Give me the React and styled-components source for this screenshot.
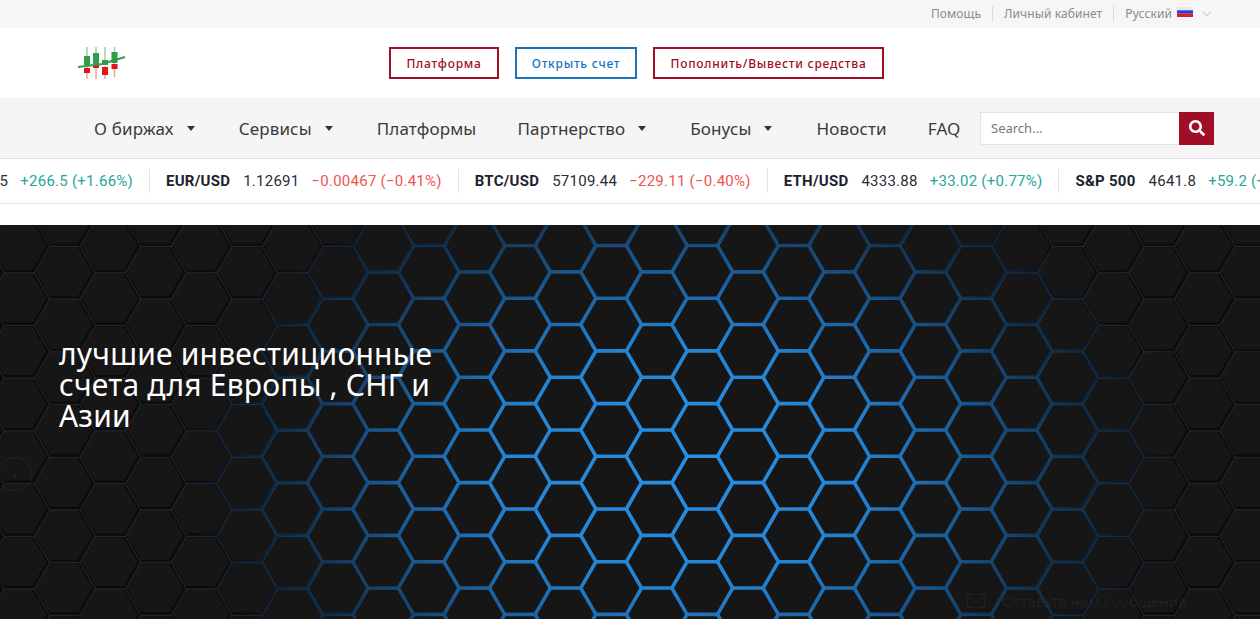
import styled, { createGlobalStyle } from 'styled-components';
import { ChevronDown, Mail } from 'lucide-react';
import { FaSearch } from 'react-icons/fa';

const GlobalStyle = createGlobalStyle`
  html, body { margin: 0; padding: 0; background: #fff; }
  body { font-family: "Noto Sans", "Open Sans", sans-serif; overflow: hidden; }
  * { box-sizing: border-box; }
`;

const Page = styled.div`
  width: 1260px;
  height: 619px;
  display: flex;
  flex-direction: column;
  overflow: hidden;
`;

const TopBar = styled.div`
  height: 28px;
  background: #f6f6f6;
  display: flex;
  align-items: center;
  justify-content: flex-end;
  padding-right: 35px;
  font-size: 12px;
  letter-spacing: 0.1px;
  color: #8b8b8b;
`;

const TopLink = styled.a`
  padding: 0 11px;
  height: 16px;
  line-height: 16px;
  border-right: ${(p) => (p.$last ? 'none' : '1px solid #ddd')};
  display: flex;
  align-items: center;
  gap: 5px;
`;

const FlagMark = styled.svg`
  margin-bottom: 4px;
`;

const LangChevron = styled(ChevronDown)`
  margin-left: 2px;
`;

const Header = styled.header`
  height: 70px;
  background: #fff;
  display: flex;
  align-items: center;
  padding-left: 78px;
`;

const LogoMark = styled.svg`
  filter: blur(0.7px);
`;

const Buttons = styled.div`
  margin-left: 263px;
  display: flex;
  gap: 16px;
`;

const OutlineButton = styled.a`
  height: 32px;
  width: ${(p) => p.$w}px;
  display: flex;
  align-items: center;
  justify-content: center;
  border: 2px solid ${(p) => p.$color};
  color: ${(p) => p.$color};
  font-size: 12px;
  font-weight: 500;
  letter-spacing: 0.75px;
`;

const NavBar = styled.nav`
  height: 60px;
  background: #f5f5f5;
  display: flex;
  align-items: center;
  padding: 0 46px 0 94px;
`;

const NavList = styled.div`
  display: flex;
  align-items: center;
  gap: 41px;
`;

const NavItem = styled.a`
  display: flex;
  align-items: center;
  gap: 13px;
  padding-right: ${(p) => (p.$menu ? 3 : 0)}px;
  font-size: 17px;
  letter-spacing: 0.15px;
  color: #3a3a3a;
  white-space: nowrap;
`;

const Caret = styled.span`
  width: 0;
  height: 0;
  border-left: 4px solid transparent;
  border-right: 4px solid transparent;
  border-top: 5px solid #333;
`;

const Search = styled.div`
  display: flex;
  width: 234px;
  height: 33px;
  margin-left: auto;
`;

const SearchInput = styled.input`
  flex: 1;
  min-width: 0;
  border: 1px solid #e3e3e3;
  border-right: none;
  background: #fff;
  padding: 0 10px;
  font-family: inherit;
  font-size: 13px;
  outline: none;
  &::placeholder { color: #777; opacity: 1; }
`;

const SearchButton = styled.button`
  width: 35px;
  border: none;
  background: #a10d26;
  color: #fff;
  display: flex;
  align-items: center;
  justify-content: center;
  padding: 0;
`;

const Ticker = styled.div`
  height: 46px;
  background: #fff;
  border-top: 1px solid #e0e3eb;
  border-bottom: 1px solid #e0e3eb;
  overflow: hidden;
  display: flex;
  align-items: center;
`;

const Track = styled.div`
  display: flex;
  align-items: center;
  flex: none;
  transform: translateX(-169px);
`;

const Quote = styled.div`
  display: flex;
  align-items: center;
  height: 24px;
  padding: 0 16px;
  gap: 12px;
  font-family: Roboto, sans-serif;
  font-size: 15px;
  letter-spacing: 0.25px;
  white-space: nowrap;
  border-left: ${(p) => (p.$first ? 'none' : '1px solid #e0e3eb')};
`;

const Symbol = styled.span`
  font-weight: 700;
  color: #1e222d;
  margin-right: 1px;
`;

const Price = styled.span`
  color: #2a2e39;
`;

const Change = styled.span`
  color: ${(p) => (p.$up ? '#26a69a' : '#ef5350')};
`;

const Spacer = styled.div`
  height: 21px;
  background: #fff;
`;

const Hero = styled.section`
  position: relative;
  flex: 1;
  background: #161616;
  overflow: hidden;
`;

const HexLayer = styled.svg`
  position: absolute;
  inset: 0;
`;

const HeroTitle = styled.h1`
  position: relative;
  margin: 0;
  padding: 113px 0 0 59px;
  width: 440px;
  font-size: 30px;
  line-height: 31px;
  letter-spacing: 0.2px;
  font-weight: 400;
  color: #fff;
`;

const PrevArrow = styled.div`
  position: absolute;
  left: -2px;
  top: 232px;
  width: 34px;
  height: 34px;
  border-radius: 50%;
  border: 1px solid rgba(255, 255, 255, 0.06);
  color: rgba(255, 255, 255, 0.08);
  display: flex;
  align-items: center;
  justify-content: center;
  font-size: 18px;
`;

const ChatHint = styled.div`
  position: absolute;
  left: 966px;
  top: 366px;
  display: flex;
  align-items: center;
  gap: 16px;
  font-size: 15px;
  color: rgba(255, 255, 255, 0.06);
`;

const HEX_S = 30.4;
const HEX_H = 52.7;
const COL_W = 45.6;

// honeycomb outline, anchored on a cell measured in the reference
function hexPath() {
  let d = '';
  for (let i = -15; i < 15; i++) {
    const cx = 656.7 + i * COL_W;
    const offset = i % 2 === 0 ? 0 : HEX_H / 2;
    for (let j = -1; j < 9; j++) {
      const cy = 231.3 - 4 * HEX_H + j * HEX_H + offset;
      const top = cy - HEX_H / 2;
      const bottom = cy + HEX_H / 2;
      const half = HEX_S / 2;
      d += `M${cx - half} ${top}L${cx + half} ${top}L${cx + HEX_S} ${cy}L${cx + half} ${bottom}L${cx - half} ${bottom}L${cx - HEX_S} ${cy}Z`;
    }
  }
  return d;
}

const honeycomb = hexPath();

const Honeycomb = () => (
  <HexLayer width="1260" height="394" viewBox="0 0 1260 394">
    <defs>
      <radialGradient
        id="glow"
        gradientUnits="userSpaceOnUse"
        cx="0"
        cy="0"
        r="1"
        gradientTransform="translate(680 240) scale(510 350)"
      >
        <stop offset="0" stopColor="#2a90e6" />
        <stop offset="0.35" stopColor="#2484d4" />
        <stop offset="0.6" stopColor="#1a5c98" stopOpacity="0.9" />
        <stop offset="0.82" stopColor="#123a5e" stopOpacity="0.6" />
        <stop offset="1" stopColor="#0e2236" stopOpacity="0" />
      </radialGradient>
      <filter id="soft">
        <feGaussianBlur stdDeviation="0.45" />
      </filter>
    </defs>
    <g filter="url(#soft)">
      <path d={honeycomb} fill="none" stroke="#08090b" strokeWidth="3.6" />
      <path d={honeycomb} fill="none" stroke="#2a2d31" strokeWidth="0.7" transform="translate(1 1)" />
      <path d={honeycomb} fill="none" stroke="url(#glow)" strokeWidth="3.6" />
    </g>
  </HexLayer>
);

const Logo = () => (
  <LogoMark width="48" height="34" viewBox="0 0 48 34">
    <g stroke="#8fd0a4" strokeWidth="1.4">
      <path d="M9 1V18M18 1V18M27 1V18M36.500 1V18" />
    </g>
    <g stroke="#f29a9a" strokeWidth="1.4">
      <path d="M9 20V33M18 20V33M27 20V33M36.500 20V31" />
    </g>
    <g fill="#2e9e48">
      <rect x="6" y="10" width="6" height="9" />
      <rect x="15" y="7" width="6" height="11" />
      <rect x="24" y="14" width="6" height="5" />
      <rect x="33.500" y="6" width="6" height="11" />
    </g>
    <g fill="#e0161e">
      <rect x="6" y="22" width="6" height="5" />
      <rect x="15" y="19" width="6" height="3" />
      <rect x="24" y="21" width="6" height="8" />
      <rect x="33.500" y="18" width="6" height="5" />
    </g>
    <path d="M0 21L24 18L47 11" fill="none" stroke="#2e9e48" strokeWidth="2" />
  </LogoMark>
);

const Flag = () => (
  <FlagMark width="16" height="10" viewBox="0 0 16 10">
    <rect width="16" height="3.300" fill="#e8e8ee" />
    <rect y="3.300" width="16" height="3.400" fill="#3238c8" />
    <rect y="6.700" width="16" height="3.300" fill="#d8202c" />
  </FlagMark>
);

const quotes = [
  { symbol: 'NASDAQ 100', price: '16320.5', change: '+266.5 (+1.66%)', up: true },
  { symbol: 'EUR/USD', price: '1.12691', change: '−0.00467 (−0.41%)', up: false },
  { symbol: 'BTC/USD', price: '57109.44', change: '−229.11 (−0.40%)', up: false },
  { symbol: 'ETH/USD', price: '4333.88', change: '+33.02 (+0.77%)', up: true },
  { symbol: 'S&P 500', price: '4641.8', change: '+59.2 (+1.29%)', up: true },
];

const navItems = [
  { label: 'О биржах', menu: true },
  { label: 'Сервисы', menu: true },
  { label: 'Платформы' },
  { label: 'Партнерство', menu: true },
  { label: 'Бонусы', menu: true },
  { label: 'Новости' },
  { label: 'FAQ' },
];

export default function App() {
  return (
    <Page>
      <GlobalStyle />
      <TopBar>
        <TopLink>Помощь</TopLink>
        <TopLink>Личный кабинет</TopLink>
        <TopLink $last>
          Русский <Flag /> <LangChevron size={14} color="#aaa" strokeWidth={1.5} />
        </TopLink>
      </TopBar>
      <Header>
        <Logo />
        <Buttons>
          <OutlineButton $w={110} $color="#a10d26">Платформа</OutlineButton>
          <OutlineButton $w={122} $color="#1a73bd">Открыть счет</OutlineButton>
          <OutlineButton $w={231} $color="#a10d26">Пополнить/Вывести средства</OutlineButton>
        </Buttons>
      </Header>
      <NavBar>
        <NavList>
          {navItems.map((item) => (
            <NavItem key={item.label} $menu={item.menu}>
              {item.label}
              {item.menu && <Caret />}
            </NavItem>
          ))}
        </NavList>
        <Search>
          <SearchInput placeholder="Search..." />
          <SearchButton><FaSearch size={16} /></SearchButton>
        </Search>
      </NavBar>
      <Ticker>
        <Track>
          {quotes.map((q, i) => (
            <Quote key={q.symbol} $first={i === 0}>
              <Symbol>{q.symbol}</Symbol>
              <Price>{q.price}</Price>
              <Change $up={q.up}>{q.change}</Change>
            </Quote>
          ))}
        </Track>
      </Ticker>
      <Spacer />
      <Hero>
        <Honeycomb />
        <HeroTitle>лучшие инвестиционные счета для Европы , СНГ и Азии</HeroTitle>
        <PrevArrow>‹</PrevArrow>
        <ChatHint>
          <Mail size={20} strokeWidth={1.2} />
          Оставьте нам сообщение
        </ChatHint>
      </Hero>
    </Page>
  );
}
